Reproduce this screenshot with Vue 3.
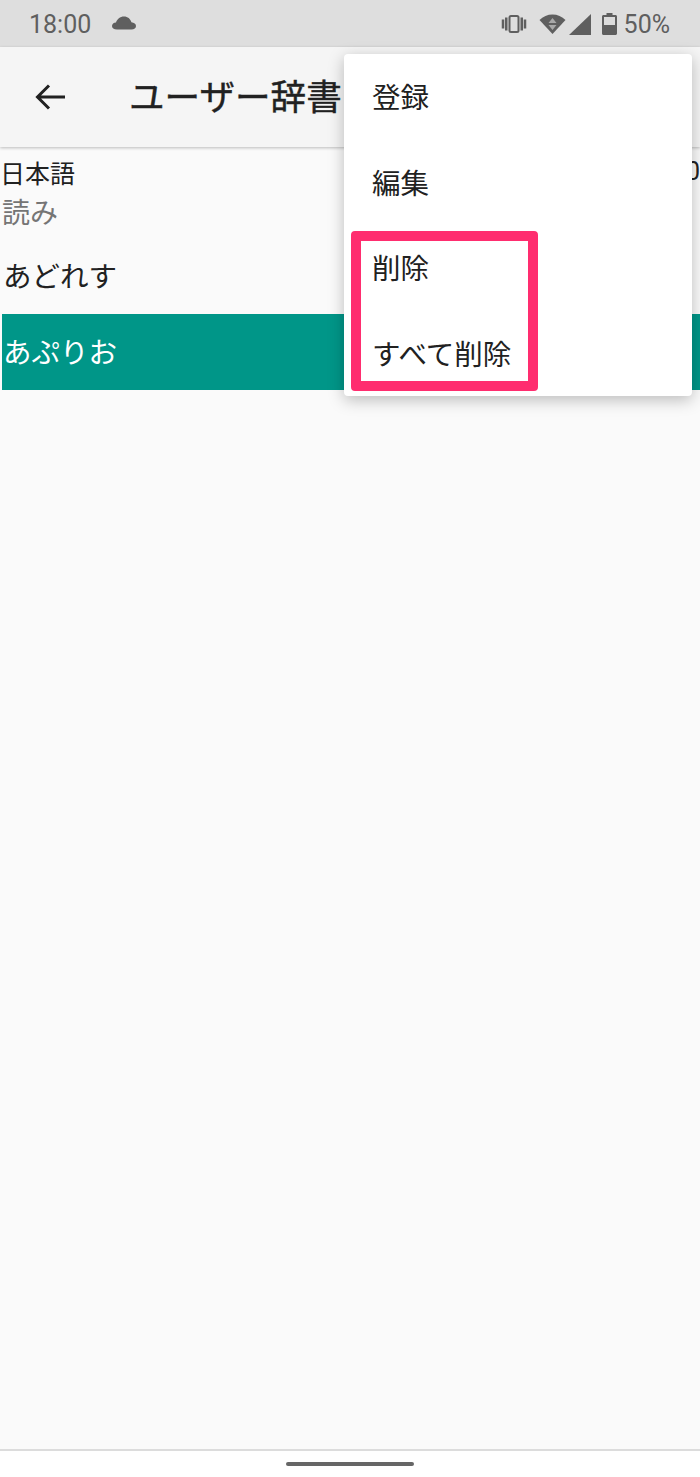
<script setup>
const menu = ['登録', '編集', '削除', 'すべて削除']
</script>

<template>
  <div class="page">
    <div class="status">
      <div class="status-left">
        <span class="time">18:00</span>
        <svg class="cloud" width="26" height="16" viewBox="0 0 26 16"><path fill="#5f5f5f" d="M6 14.500C2.800 14.500 1 13 1 11c0-2 1.700-3.300 4-3.500C6 4.200 9 1.500 13 1.500c3.700 0 6.500 2.300 7.400 5.800 2.700.2 4.600 1.700 4.600 3.800 0 2-1.800 3.400-4.500 3.400z"/></svg>
      </div>
      <div class="status-right">
        <svg width="26" height="20" viewBox="0 0 26 20"><g fill="none" stroke="#5f5f5f"><rect x="8.500" y="2" width="9" height="16" rx="1.500" stroke-width="2"/><path d="M5.250 3.500v13M20.750 3.500v13M2 5.500v9M24 5.500v9" stroke-width="2.500"/></g></svg>
        <svg class="wifi" width="27" height="22" viewBox="0 0 27 22"><path fill="#5f5f5f" d="M0.500 7C4 3.500 8.500 1.500 13.500 1.500S23 3.500 26.500 7L13.500 21z"/><path fill="#a8a8a8" d="M13.500 5l4 5h-8zM9.500 12h8l-4 5z"/></svg>
        <svg class="signal" width="23" height="22" viewBox="0 0 23 22"><path fill="#5f5f5f" d="M23 1v21H1z"/></svg>
        <svg class="battery" width="15" height="22" viewBox="0 0 15 22"><path fill="#5f5f5f" d="M4.500 0h6v2h3c.8 0 1.500.7 1.500 1.500V20.500c0 .8-.7 1.500-1.500 1.500h-12C.7 22 0 21.300 0 20.500V3.500C0 2.700.7 2 1.500 2h3z"/><rect x="2" y="4" width="11" height="8" fill="#dcdcdc"/></svg>
        <span class="pct">50%</span>
      </div>
    </div>

    <header class="toolbar">
      <svg class="back" width="32" height="32" viewBox="0 0 32 32"><path fill="none" stroke="#212121" stroke-width="3" d="M31 16H4M15 4.500 3.500 16 15 27.500"/></svg>
      <h1 class="title">ユーザー辞書</h1>
    </header>

    <main class="content">
      <div class="header-row">
        <div class="lang">日本語</div>
        <div class="lang-end">0</div>
      </div>
      <div class="yomi">読み</div>
      <div class="word">あどれす</div>
      <div class="word selected">あぷりお</div>
    </main>

    <footer class="navbar"><span class="handle"></span></footer>

    <div class="menu">
      <div v-for="item in menu" :key="item" class="menu-item">{{ item }}</div>
    </div>
    <div class="highlight"></div>
  </div>
</template>

<style>
body { margin: 0; }
</style>

<style scoped>
.page {
  position: relative;
  width: 700px;
  height: 1477px;
  overflow: hidden;
  display: flex;
  flex-direction: column;
  background: #fafafa;
  font-family: "Noto Sans CJK JP", "Noto Sans", sans-serif;
  color: #212121;
}
.status {
  height: 47px;
  flex: none;
  display: flex;
  align-items: center;
  justify-content: space-between;
  padding: 0 30px 0 29px;
  background: #dedede;
  color: #5f5f5f;
  font-family: Roboto, sans-serif;
  font-size: 25px;
}
.status-left, .status-right { display: flex; align-items: center; }
.time { line-height: 50px; padding-top: 2px; }
.cloud { margin-left: 20px; margin-top: -2px; }
.status-right svg { flex: none; }
.wifi { margin-left: 12px; }
.signal { margin-left: 2px; }
.battery { margin-left: 11px; }
.pct { margin-left: 7px; line-height: 50px; padding-top: 2px; }
.toolbar {
  height: 100px;
  flex: none;
  display: flex;
  align-items: center;
  padding: 0 0 2px 34px;
  box-sizing: border-box;
  background: #f5f5f5;
  box-shadow: 0 1px 3px rgba(0,0,0,.25);
  z-index: 1;
}
.back { flex: none; margin-top: 2px; }
.title {
  margin: -2px 0 0 63px;
  font-size: 35.600px;
  font-weight: 400;
  line-height: 50px;
  white-space: nowrap;
  -webkit-text-stroke: 0.4px #212121;
}
.content { flex: 1; padding: 11px 0 0 2px; }
.header-row { display: flex; justify-content: space-between; height: 28px; }
.lang { font-size: 25px; line-height: 28px; margin-left: -2px; }
.lang-end { font-size: 25px; line-height: 28px; font-family: Roboto, sans-serif; }
.yomi { font-size: 28px; line-height: 50px; margin-bottom: 2px; color: #757575; }
.word {
  height: 76px;
  display: flex;
  align-items: center;
  padding: 0 0 3px 1px;
  box-sizing: border-box;
  font-size: 28.500px;
}
.selected {
  color: #fff;
  background: #009688;
}
.navbar {
  height: 28px;
  flex: none;
  display: flex;
  justify-content: center;
  align-items: center;
  box-sizing: border-box;
  border-top: 2px solid #dcdcdc;
  background: #fff;
}
.handle {
  width: 128px;
  height: 4px;
  border-radius: 2px;
  background: #666;
}
.menu {
  position: absolute;
  top: 54px;
  left: 344px;
  width: 348px;
  height: 342px;
  background: #fff;
  border-radius: 4px;
  box-shadow: 0 4px 16px rgba(0,0,0,.25);
  z-index: 2;
}
.menu-item {
  height: 85.500px;
  display: flex;
  align-items: center;
  padding: 0 0 2px 28px;
  font-size: 28.500px;
  box-sizing: border-box;
}
.highlight {
  position: absolute;
  top: 231px;
  left: 351px;
  width: 187px;
  height: 160px;
  box-sizing: border-box;
  border: 10px solid #ff2d6f;
  border-radius: 4px;
  z-index: 3;
}
</style>
